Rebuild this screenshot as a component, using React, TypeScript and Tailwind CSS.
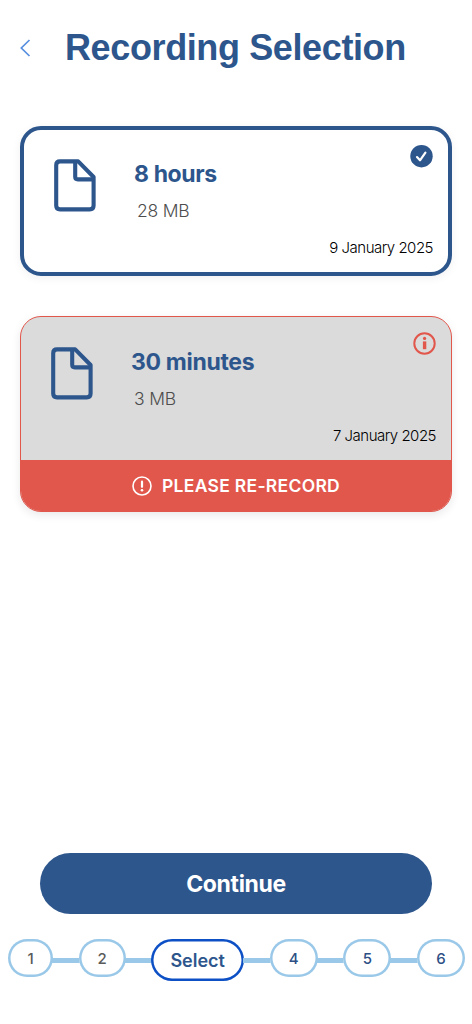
import React from "react";

function FileIcon() {
  return (
    <svg className="block h-[53px] w-[42px] shrink-0" viewBox="0 0 42 53" fill="none" stroke="#2d568d" strokeWidth="4.1" strokeLinejoin="round">
      <path d="M6 2.4H24.2L39.6 18V46.6Q39.6 50.4 35.8 50.4H6Q2.2 50.4 2.2 46.6V6.2Q2.2 2.4 6 2.4Z" />
      <path d="M21.2 2.8V17.8Q21.2 20.4 23.8 20.4H39.2" />
    </svg>
  );
}

function CheckBadge() {
  return (
    <svg className="block size-[23px]" viewBox="0 0 23 23" fill="none">
      <circle cx="11.5" cy="11.2" r="11.2" fill="#2d568d" />
      <path d="M7 12.1L10 15.3L15.4 7.6" stroke="white" strokeWidth="2.2" strokeLinecap="round" strokeLinejoin="round" />
    </svg>
  );
}

function InfoBadge() {
  return (
    <svg className="block size-[23px]" viewBox="0 0 23 23" fill="none">
      <circle cx="11.5" cy="11.5" r="10.2" stroke="#e2574c" strokeWidth="2" />
      <rect x="9.9" y="9.4" width="3.4" height="7.8" fill="#e2574c" />
      <circle cx="11.6" cy="6.4" r="1.6" fill="#e2574c" />
    </svg>
  );
}

function AlertIcon() {
  return (
    <svg className="block size-5" viewBox="0 0 20 20" fill="none">
      <circle cx="10" cy="10" r="9" stroke="white" strokeWidth="1.6" />
      <path d="M10 5.7V10.8" stroke="white" strokeWidth="2.2" strokeLinecap="round" />
      <circle cx="10" cy="14.2" r="1.3" fill="white" />
    </svg>
  );
}

function Step({ label, width, muted }: { label: string; width: string; muted?: boolean }) {
  return (
    <div className={`flex h-[38px] shrink-0 items-center justify-center rounded-[19px] bg-white pt-[2px] text-[15px] font-medium shadow-[inset_0_0_0_2.5px_#9ac8e8] ${width} ${muted ? "text-[#5b5b5b]" : "text-[#2d4f85]"}`}>
      {label}
    </div>
  );
}

function Line() {
  return <div className="-mx-px mt-[19px] h-[5px] min-w-0 flex-1 bg-[#9ac8e8]" />;
}

export default function App() {
  return (
    <main className="flex h-[1024px] w-[472px] flex-col bg-white font-['Inter',sans-serif]">
      <header className="flex h-[95px] items-center pl-5">
        <svg className="h-[18px] w-[11px] shrink-0" viewBox="0 0 11 18" fill="none">
          <path d="M9.5 1L1.3 9L9.5 17" stroke="#578fe0" strokeWidth="1.7" />
        </svg>
        <h1 className="ml-[34px] whitespace-nowrap font-['Liberation_Sans',sans-serif] text-[36px] leading-10 font-bold tracking-[-0.38px] text-[#2d568d]">Recording Selection</h1>
      </header>

      <section className="mx-5 mt-[31px] flex h-[150px] shrink-0 rounded-[21px] border-4 border-[#2d568d] pt-[29px] pl-[30px] shadow-[0_2px_10px_rgba(0,0,0,0.06)]">
        <FileIcon />
        <div className="ml-[38px] flex flex-col">
          <h2 className="whitespace-nowrap text-[23px] leading-[30px] font-[650] tracking-[-0.38px] text-[#2d568d]">8 hours</h2>
          <p className="mt-[9px] ml-[3px] text-[17.5px] leading-[26px] font-light tracking-[-0.2px] text-[#4d4d4d]">28 MB</p>
        </div>
        <div className="-mt-[14px] mr-[15px] ml-auto flex h-[128px] flex-col items-end">
          <CheckBadge />
          <p className="mt-[68px] text-[15px] leading-6 font-light tracking-[-0.5px] text-black">9 January 2025</p>
        </div>
      </section>

      <section className="mx-5 mt-10 flex h-[196px] shrink-0 flex-col overflow-hidden rounded-[21px] border border-[#e2574c] bg-[#dbdbdb] shadow-[0_3px_10px_rgba(0,0,0,0.09)]">
        <div className="flex h-[143px] shrink-0 pt-[30px] pl-[30px]">
          <FileIcon />
          <div className="ml-[38px] flex flex-col">
            <h2 className="whitespace-nowrap text-[23px] leading-[30px] font-[650] tracking-[-0.32px] text-[#2d568d]">30 minutes</h2>
            <p className="mt-[9px] ml-[3px] text-[17.5px] leading-[26px] font-light tracking-[-0.2px] text-[#4d4d4d]">3 MB</p>
          </div>
          <div className="-mt-[15px] mr-[15px] ml-auto flex flex-col items-end">
            <InfoBadge />
            <p className="mt-[69px] text-[15px] leading-6 font-light tracking-[-0.5px] text-black">7 January 2025</p>
          </div>
        </div>
        <div className="flex flex-1 items-center justify-center gap-[10px] bg-[#e2574c] text-[17.5px] font-semibold tracking-[0.3px] text-white">
          <AlertIcon />
          <span className="pt-px">PLEASE RE-RECORD</span>
        </div>
      </section>

      <footer className="mt-auto flex h-[171px] shrink-0 flex-col">
        <button className="mx-10 h-[61px] shrink-0 rounded-full bg-[#2d568d] pt-px text-[23px] font-[650] tracking-[-0.35px] text-white">Continue</button>
        <nav className="mt-[25px] mr-[7px] ml-2 flex items-start">
          <Step label="1" width="w-[45px]" muted />
          <Line />
          <Step label="2" width="w-[47px]" muted />
          <Line />
          <div className="flex h-[42px] w-[93px] shrink-0 items-center justify-center rounded-full text-[18px] font-semibold text-[#2d568d] shadow-[inset_0_0_0_2.5px_#0d50c6]">Select</div>
          <Line />
          <Step label="4" width="w-[48px]" />
          <Line />
          <Step label="5" width="w-[48px]" />
          <Line />
          <Step label="6" width="w-[48px]" />
        </nav>
      </footer>
    </main>
  );
}
